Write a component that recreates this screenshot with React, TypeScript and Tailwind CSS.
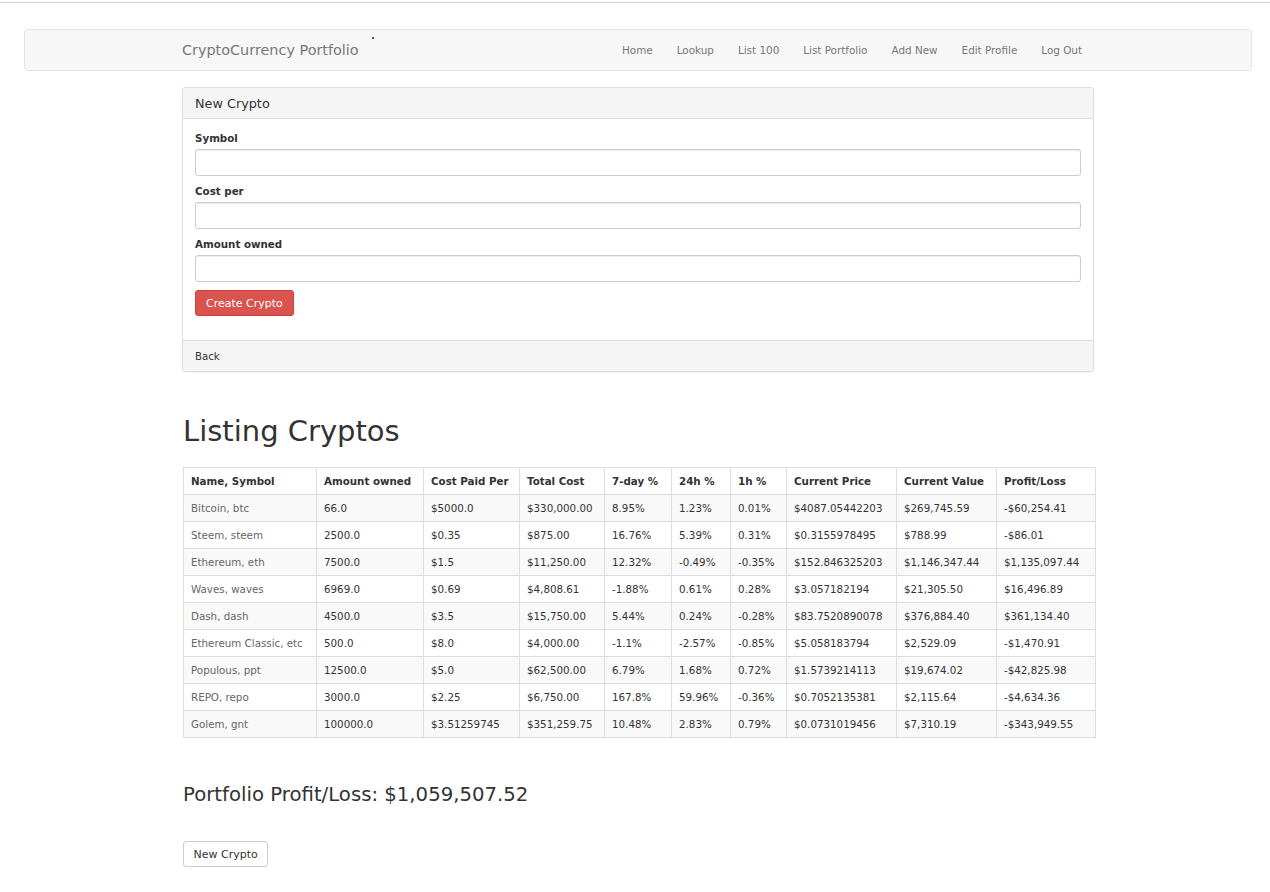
import React from "react";

const navItems = ["Home", "Lookup", "List 100", "List Portfolio", "Add New", "Edit Profile", "Log Out"];

const headers = [
  "Name, Symbol",
  "Amount owned",
  "Cost Paid Per",
  "Total Cost",
  "7-day %",
  "24h %",
  "1h %",
  "Current Price",
  "Current Value",
  "Profit/Loss",
];

const widths = [133, 107, 96, 85, 67, 59, 56, 110, 100, 99];

const rows: string[][] = [
  ["Bitcoin, btc", "66.0", "$5000.0", "$330,000.00", "8.95%", "1.23%", "0.01%", "$4087.05442203", "$269,745.59", "-$60,254.41"],
  ["Steem, steem", "2500.0", "$0.35", "$875.00", "16.76%", "5.39%", "0.31%", "$0.3155978495", "$788.99", "-$86.01"],
  ["Ethereum, eth", "7500.0", "$1.5", "$11,250.00", "12.32%", "-0.49%", "-0.35%", "$152.846325203", "$1,146,347.44", "$1,135,097.44"],
  ["Waves, waves", "6969.0", "$0.69", "$4,808.61", "-1.88%", "0.61%", "0.28%", "$3.057182194", "$21,305.50", "$16,496.89"],
  ["Dash, dash", "4500.0", "$3.5", "$15,750.00", "5.44%", "0.24%", "-0.28%", "$83.7520890078", "$376,884.40", "$361,134.40"],
  ["Ethereum Classic, etc", "500.0", "$8.0", "$4,000.00", "-1.1%", "-2.57%", "-0.85%", "$5.058183794", "$2,529.09", "-$1,470.91"],
  ["Populous, ppt", "12500.0", "$5.0", "$62,500.00", "6.79%", "1.68%", "0.72%", "$1.5739214113", "$19,674.02", "-$42,825.98"],
  ["REPO, repo", "3000.0", "$2.25", "$6,750.00", "167.8%", "59.96%", "-0.36%", "$0.7052135381", "$2,115.64", "-$4,634.36"],
  ["Golem, gnt", "100000.0", "$3.51259745", "$351,259.75", "10.48%", "2.83%", "0.79%", "$0.0731019456", "$7,310.19", "-$343,949.55"],
];

function Field({ label }: { label: string }) {
  return (
    <div className="mb-[8px]">
      <label className="block h-[14px] mb-[4px] text-[10.3px] leading-[14px] font-bold text-[#333]">{label}</label>
      <input
        type="text"
        className="block w-full h-[27px] rounded-[3px] border border-[#cccccc] bg-white shadow-[inset_0_1px_1px_rgba(0,0,0,0.075)] outline-none"
      />
    </div>
  );
}

export default function App() {
  return (
    <div className="min-h-[892px] bg-white font-['DejaVu_Sans',sans-serif] text-[#333]">
      <div className="h-[2px]" />
      <div className="h-px bg-[#d4d4d4]" />

      {/* Navbar */}
      <div className="relative mt-[26px] ml-[24px] mr-[18px] h-[42px] rounded-[4px] border border-[#e4e4e4] bg-[#f7f7f7] flex items-center justify-between pl-[157px] pr-[157px]">
        <span className="text-[14.4px] leading-[20px] text-[#777]">CryptoCurrency Portfolio</span>
        <span className="absolute left-[347px] top-[7px] h-[2px] w-[2px] rounded-full bg-[#222]" />
        <ul className="flex items-center">
          {navItems.map((n) => (
            <li key={n} className="px-[12px] text-[10.4px] leading-[16px] text-[#777]">
              {n}
            </li>
          ))}
        </ul>
      </div>

      {/* Main container */}
      <div className="ml-[182px] w-[912px]">
        {/* Panel */}
        <div className="mt-[16px] rounded-[3px] border border-[#dddddd] bg-white shadow-[0_1px_1px_rgba(0,0,0,0.05)]">
          <div className="h-[31px] flex items-center px-[12px] pt-px bg-[#f5f5f5] border-b border-[#dddddd] rounded-t-[3px]">
            <span className="text-[12.8px] leading-[16px] text-[#333]">New Crypto</span>
          </div>
          <div className="px-[12px] pt-[12px] pb-[24px]">
            <Field label="Symbol" />
            <Field label="Cost per" />
            <Field label="Amount owned" />
            <button className="block h-[26px] px-[10px] pt-[2px] rounded-[3px] border border-[#d43f3a] bg-[#d9534f] text-white text-[11px] leading-[16px]">
              Create Crypto
            </button>
          </div>
          <div className="h-[31px] flex items-center px-[12px] pt-[2px] bg-[#f5f5f5] border-t border-[#dddddd] rounded-b-[3px]">
            <span className="text-[10.2px] leading-[14px] text-[#333]">Back</span>
          </div>
        </div>

        {/* Listing */}
        <div className="ml-px">
          <h1 className="mt-[43px] text-[29px] leading-[32px] font-normal text-[#333]">Listing Cryptos</h1>

          <table className="mt-[20px] w-[912px] table-fixed border-collapse border border-[#dddddd] text-[10.3px] leading-[14px]">
            <colgroup>
              {widths.map((w, i) => (
                <col key={i} style={{ width: w }} />
              ))}
            </colgroup>
            <thead>
              <tr>
                {headers.map((h) => (
                  <th key={h} className="border border-[#dddddd] px-[7px] py-[6px] text-left font-bold text-[#333] whitespace-nowrap">
                    {h}
                  </th>
                ))}
              </tr>
            </thead>
            <tbody>
              {rows.map((r, ri) => (
                <tr key={ri} className={ri % 2 === 0 ? "bg-[#f9f9f9]" : "bg-white"}>
                  {r.map((c, ci) => (
                    <td
                      key={ci}
                      className={
                        ci === 0
                          ? "border border-[#dddddd] px-[7px] py-[6px] text-[#666] whitespace-nowrap"
                          : "border border-[#dddddd] px-[7px] py-[6px] text-[#333] whitespace-nowrap"
                      }
                    >
                      {c}
                    </td>
                  ))}
                </tr>
              ))}
            </tbody>
          </table>

          <h3 className="mt-[46px] text-[19.7px] leading-[21px] font-normal text-[#333]">
            Portfolio Profit/Loss: $1,059,507.52
          </h3>

          <button className="mt-[36px] h-[26px] px-[9.5px] pt-[2px] rounded-[3px] border border-[#cccccc] bg-white text-[#333] text-[11px] leading-[16px]">
            New Crypto
          </button>
        </div>
      </div>
    </div>
  );
}
